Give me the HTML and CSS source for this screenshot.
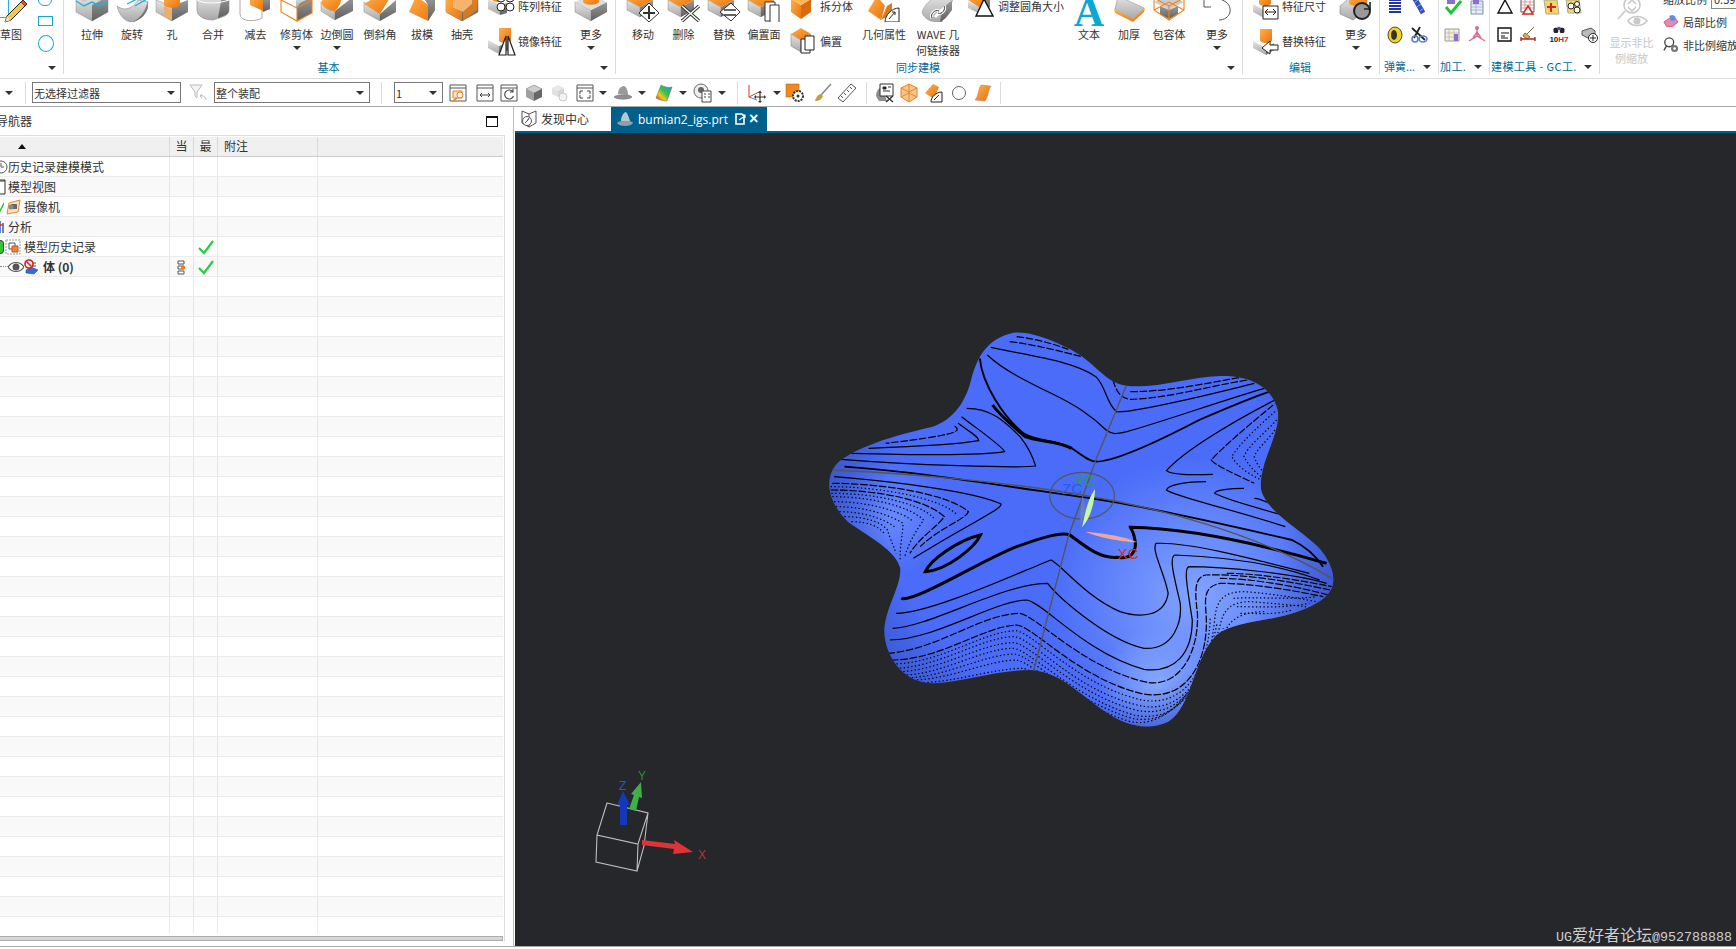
FILE: index.html
```html
<!DOCTYPE html>
<html lang="zh-CN">
<head>
<meta charset="utf-8">
<title>bumian2_igs.prt</title>
<link rel="stylesheet" href="styles.css">
</head>
<body>
<svg class="defs" aria-hidden="true">
  <defs>
    <linearGradient id="gl" x1="0" y1="0" x2="0" y2="1"><stop offset="0" stop-color="#e4e4e4"/><stop offset="1" stop-color="#a8a8a8"/></linearGradient>
    <linearGradient id="gr" x1="0" y1="0" x2="0" y2="1"><stop offset="0" stop-color="#9a9a9a"/><stop offset="1" stop-color="#5f5f5f"/></linearGradient>
    <linearGradient id="go" x1="0" y1="0" x2="1" y2="1"><stop offset="0" stop-color="#ffb04a"/><stop offset="1" stop-color="#e8730c"/></linearGradient>
    <symbol id="extrude" viewBox="0 0 34 22"><path d="M1-4V12L17 21 33 12V-4L25 1 17-3 9 1Z" fill="url(#gl)" stroke="#888" stroke-width=".5"/><path d="M17 21V5L25 1 33-4V12Z" fill="url(#gr)"/><path d="M1 1 9 6 17 2 25 6 33 1" fill="none" stroke="#18b4dc" stroke-width="1.4"/></symbol>
    <symbol id="revolve" viewBox="0 0 34 22"><path d="M2 6C10 12 18 8 23 0L33 2C31 12 24 21 17 22 10 22 4 15 2 6Z" fill="url(#gl)" stroke="#777" stroke-width=".5"/><path d="M18 22C26 18 31 10 33 0V8C31 15 25 20 18 22Z" fill="url(#gr)"/><path d="M12 4 26-3M20 6 32-1" stroke="#18b4dc" stroke-width="1.3" fill="none"/></symbol>
    <symbol id="hole" viewBox="0 0 34 22"><path d="M1 0V12L17 21V6Z" fill="url(#gl)" stroke="#888" stroke-width=".5"/><path d="M33 0V12L17 21V6Z" fill="url(#gr)"/><path d="M9-4H25V4C25 9 9 9 9 4Z" fill="url(#go)"/><path d="M9 6 17 10V20L9 16Z" fill="#e9b06d"/></symbol>
    <symbol id="unite" viewBox="0 0 34 22"><path d="M1-4H33V10C33 16 26 17 17 20 8 20 1 16 1 10Z" fill="url(#gl)" stroke="#888" stroke-width=".6"/><path d="M22 18C30 15 33 14 33 10V-4H26Z" fill="url(#gr)"/><path d="M1 0C8 4 22 4 33 0" fill="none" stroke="#fff"/></symbol>
    <symbol id="subtract" viewBox="0 0 34 22"><path d="M1-3V14C1 22 17 22 23 18V0" fill="none" stroke="#aaa"/><path d="M11-3 24-3V11L11 5Z" fill="url(#go)"/><path d="M24-3H31V9L24 12Z" fill="url(#gr)"/></symbol>
    <symbol id="trim" viewBox="0 0 34 22"><path d="M17 4 32-3V13L17 21Z" fill="url(#gr)"/><path d="M16 9V-3H30L20 3Z" fill="url(#gl)"/><path d="M1 0 17 8 32 0M1 0V12L17 21 32 13V0M17 8V21" fill="none" stroke="#f0811a" stroke-width="1.1"/></symbol>
    <symbol id="blend" viewBox="0 0 34 22"><path d="M1 2V11L15 20V11C9 11 3 7 1 2Z" fill="url(#gl)" stroke="#888" stroke-width=".5"/><path d="M33-3V11L15 20V11Z" fill="url(#gr)"/><path d="M1 3C3 7 9 11 15 11 19 7 21 2 22-3H3Z" fill="url(#go)"/></symbol>
    <symbol id="chamfer" viewBox="0 0 34 22"><path d="M1 2V12L17 21V14Z" fill="url(#gl)" stroke="#888" stroke-width=".5"/><path d="M33 0V12L17 21V14Z" fill="url(#gr)"/><path d="M1 4 14-4 28-4 17 14Z" fill="url(#go)"/></symbol>
    <symbol id="draft" viewBox="0 0 34 22"><path d="M4 12 23 21 30 10 11-4Z" fill="url(#go)"/><path d="M30-4V10L23 21V5L20 0Z" fill="url(#gr)"/></symbol>
    <symbol id="shell" viewBox="0 0 34 22"><path d="M1-4V12L17 21 33 12V-4Z" fill="url(#gr)" stroke="#666" stroke-width=".5"/><path d="M1-4V12L17 21V12L8 8 8-4Z" fill="url(#go)"/><path d="M8-4H27V4L18 12 8 8Z" fill="#f6b36d"/><path d="M27-4V4L18 12V21L32 10V-4Z" fill="#e37d14" opacity=".85"/></symbol>
    <symbol id="more1" viewBox="0 0 34 22"><path d="M1 2V12L17 21V10Z" fill="url(#gl)" stroke="#888" stroke-width=".5"/><path d="M33 2V12L17 21V10Z" fill="url(#gr)"/><path d="M1 2 17-5 33 2 17 10Z" fill="#ddd"/><path d="M9-5H25V1C25 6 9 6 9 1Z" fill="url(#go)"/></symbol>
    <symbol id="okcube" viewBox="0 0 34 22"><path d="M1 0V10L14 17V7Z" fill="url(#gl)" stroke="#888" stroke-width=".5"/><path d="M27 0V10L14 17V7Z" fill="url(#gr)"/><path d="M1 0 14-7 27 0 14 7Z" fill="url(#go)"/></symbol>
    <symbol id="s-move" viewBox="0 0 34 22"><use href="#okcube"/><path d="M23 3 33 13 23 22 13 13Z" fill="#fff" stroke="#333"/><path d="M23 6V19M17 13H29" stroke="#333" stroke-width="2"/></symbol>
    <symbol id="s-del" viewBox="0 0 34 22"><use href="#okcube"/><path d="M15 6 32 21M32 6 15 21" stroke="#333" stroke-width="3.4"/><path d="M15 6 32 21M32 6 15 21" stroke="#fff" stroke-width="1.4"/></symbol>
    <symbol id="s-rep" viewBox="0 0 34 22"><use href="#okcube"/><path d="M13 12 24 3 33 12 24 21Z" fill="#fff" stroke="#333"/><path d="M17 10H29M17 15H29" stroke="#333" stroke-width="1.6"/></symbol>
    <symbol id="s-off" viewBox="0 0 34 22"><use href="#okcube"/><path d="M18 2H28V21H18Z" fill="#fff" stroke="#333"/><path d="M23 5H32V24H23Z" fill="#fff" stroke="#333"/></symbol>
    <symbol id="split" viewBox="0 0 30 30"><path d="M3 8V21L13 28V14Z" fill="url(#go)"/><path d="M23 8V21L13 28V14Z" fill="#d86c0a"/><path d="M3 8 13 2 23 8 13 14Z" fill="#ffb75c"/></symbol>
    <symbol id="offset" viewBox="0 0 30 30"><path d="M3 8V20L13 26V14Z" fill="url(#gl)" stroke="#777" stroke-width=".5"/><path d="M23 8V20L13 26V14Z" fill="url(#gr)"/><path d="M3 8 13 2 23 8 13 14Z" fill="url(#go)"/><path d="M13 13H22V27H13Z" fill="#fff" stroke="#222"/><path d="M17 10H26V24H17Z" fill="#fff" stroke="#222"/></symbol>
    <symbol id="pattern" viewBox="0 0 30 30"><path d="M1 8 13 14V24L1 18Z" fill="url(#gl)"/><path d="M13 14 20 12V22L13 24Z" fill="url(#gr)"/><path d="M5 2H15V8C15 12 5 12 5 8Z" fill="url(#go)"/><g fill="#fff" stroke="#222"><circle cx="14" cy="7" r="4"/><circle cx="23" cy="7" r="4"/><circle cx="14" cy="16" r="4"/><circle cx="23" cy="16" r="4"/></g></symbol>
    <symbol id="mirror" viewBox="0 0 30 30"><path d="M1 14 12 20V28L1 22Z" fill="url(#gl)"/><path d="M12 2H24V14C24 18 12 18 12 14Z" fill="url(#go)"/><path d="M12 20 22 16V24L12 28Z" fill="url(#gr)"/><path d="M19 10 12 29H19ZM21 10V29H28Z" fill="#fff" stroke="#222" stroke-width="1.2"/></symbol>
    <symbol id="geom" viewBox="0 0 34 22"><path d="M1 11 14 20 18 6 10-4Z" fill="url(#go)"/><path d="M14 20 20 6 25 3V14Z" fill="#d86c0a" opacity=".9"/><path d="M18 22 32 22 32 8C25 8 18 15 18 22Z" fill="#fff" stroke="#222"/><path d="M22 19 28 12M25 12H28V15" fill="none" stroke="#222"/></symbol>
    <symbol id="wave" viewBox="0 0 34 22"><path d="M1 12C3 5 12-4 20-5L32 1C26 3 22 10 21 22 12 23 3 20 1 12Z" fill="url(#gl)" stroke="#888" stroke-width=".5"/><path d="M19 22C20 12 24 4 31 1V10C28 14 24 20 19 22Z" fill="url(#gr)"/><path d="M11 18C9 14 14 9 18 11M17 13C21 15 25 9 23 6M14 17 22 9" fill="none" stroke="#fff" stroke-width="3"/><path d="M11 18C9 14 14 9 18 11M17 13C21 15 25 9 23 6" fill="none" stroke="#333" stroke-width="1"/></symbol>
    <symbol id="fillet" viewBox="0 0 30 30"><path d="M2 10 14 17V23L2 17Z" fill="url(#gl)"/><path d="M2 9 10 2H20V10L14 17Z" fill="url(#go)"/><path d="M20 2V10L14 17V23L24 16V2Z" fill="url(#gr)"/><path d="M18 8 27 25H10Z" fill="#fff" stroke="#111" stroke-width="1.4"/></symbol>
    <symbol id="thick" viewBox="0 0 34 22"><path d="M6-4 32 8 21 19 3 9Z" fill="url(#gl)" stroke="#888" stroke-width=".5"/><path d="M2 9 21 19 33 8 32 12 21 22 3 13Z" fill="url(#go)"/></symbol>
    <symbol id="wrap" viewBox="0 0 34 22"><path d="M17-4 32 2 17 10 2 2Z" fill="#ccc"/><path d="M8 6 17 10 26 6 26 14 17 19 8 14Z" fill="url(#gr)"/><path d="M2-2 17 6 32-2M2-2V10L17 20 32 10V-2M17 6V20M2 10 17 2 32 10" fill="none" stroke="#f0811a" stroke-width="1.1"/></symbol>
    <symbol id="more2" viewBox="0 0 34 22"><path d="M4 0V7H11" fill="none" stroke="#555" stroke-width="1"/><path d="M22 0C28 2 31 7 30 12 29 17 24 20 19 20" fill="none" stroke="#555" stroke-width="1"/></symbol>
    <symbol id="dim" viewBox="0 0 30 30"><path d="M1 13 14 20V28L1 21Z" fill="url(#gl)"/><path d="M14 20 20 17V25L14 28Z" fill="url(#gr)"/><path d="M7 2H19V12C19 16 7 16 7 12Z" fill="url(#go)"/><path d="M11 15H26V28H11Z" fill="#fff" stroke="#222"/><path d="M13 21H24M13 21 16 18M13 21 16 24M24 21 21 18M24 21 21 24" stroke="#222" fill="none"/></symbol>
    <symbol id="repl" viewBox="0 0 30 30"><path d="M1 15 14 22V29L1 22Z" fill="url(#gl)"/><path d="M14 22 22 17V24L14 29Z" fill="url(#gr)"/><path d="M8 3H20V14C20 18 8 18 8 14Z" fill="url(#go)"/><path d="M10 22 18 15V19H26V24H18V28Z" fill="#fff" stroke="#222"/></symbol>
    <symbol id="more3" viewBox="0 0 34 22"><path d="M1 6 12-3 28-2V10L14 20 1 14Z" fill="url(#gl)" stroke="#777" stroke-width=".5"/><path d="M10-3H28V3C28 7 10 7 10 3Z" fill="url(#go)"/><circle cx="23" cy="11" r="8" fill="#999" stroke="#222" stroke-width="2"/><path d="M31 2V9H25" fill="none" stroke="#222" stroke-width="1.6"/></symbol>
    <symbol id="spring" viewBox="0 0 18 18"><path d="M3 2H15M3 5H15M3 8H15M3 11H15M3 14H15" stroke="#2233aa" stroke-width="2"/></symbol>
    <symbol id="spring2" viewBox="0 0 18 18"><path d="M5 1 13 15" stroke="#2e50c8" stroke-width="5"/><path d="M4 5 8 2M7 9 11 6M10 13 14 10" stroke="#aac" stroke-width="1"/></symbol>
    <symbol id="washer" viewBox="0 0 18 18"><ellipse cx="9" cy="9" rx="7" ry="8" fill="#f5d21f" stroke="#222" stroke-width=".8"/><ellipse cx="8" cy="9" rx="3" ry="5" fill="#333"/></symbol>
    <symbol id="scis" viewBox="0 0 18 18"><path d="M2 2 15 14M10 1 4 12" stroke="#222" stroke-width="1.8"/><ellipse cx="13" cy="13" rx="4" ry="3" fill="none" stroke="#5c7fc4" stroke-width="1.6"/><ellipse cx="5" cy="13" rx="3" ry="3" fill="none" stroke="#5c7fc4" stroke-width="1.6"/></symbol>
    <symbol id="check" viewBox="0 0 18 18"><path d="M3-1H11V6H3Z" fill="#8a6ed0"/><path d="M2 9 7 15 17 3" fill="none" stroke="#22c33a" stroke-width="3"/></symbol>
    <symbol id="table" viewBox="0 0 18 18"><path d="M3 3H15V16H3Z" fill="#e8eef8" stroke="#7f8fb0"/><path d="M3 6H15M3 9H15M3 12H15M8 3V16" stroke="#9aa8c0" stroke-width=".7"/><path d="M5-2H11V6H5Z" fill="#8a6ed0"/></symbol>
    <symbol id="grid2" viewBox="0 0 18 18"><path d="M1 3H15V15H1Z" fill="#f6efd8" stroke="#9a9a9a"/><path d="M1 7H15M1 11H15M5 3V15M10 3V15" stroke="#aaa" stroke-width=".6"/><path d="M10 8H14V15H10Z" fill="#8a6ed0"/></symbol>
    <symbol id="pinkaxes" viewBox="0 0 18 18"><circle cx="9" cy="2" r="2" fill="#d86a8a"/><path d="M9 2V10L1 15M9 10 17 15M5 12 9 6 13 12" fill="none" stroke="#d86a8a" stroke-width="1.4"/></symbol>
    <symbol id="tri" viewBox="0 0 18 18"><path d="M9 2 16 15H2Z" fill="none" stroke="#111" stroke-width="1.4"/></symbol>
    <symbol id="tbl-r" viewBox="0 0 18 18"><path d="M2 1H15V14H2Z" fill="#fff" stroke="#555"/><path d="M2 4H15M2 7H15M2 10H15M6 1V14M11 1V14" stroke="#c66" stroke-width=".6"/><path d="M9 8 14 16H4Z" fill="#fff" stroke="#d22" stroke-width="1.5"/></symbol>
    <symbol id="ystar" viewBox="0 0 18 18"><path d="M2 2 15 2 17 16H4Z" fill="#f3d66b" stroke="#aa9"/><path d="M9 5V14M5 9H14" stroke="#d22" stroke-width="2"/></symbol>
    <symbol id="ychain" viewBox="0 0 18 18"><path d="M1 2 14 2 16 15H3Z" fill="#f3d66b" stroke="#aa9"/><circle cx="6" cy="8" r="3" fill="#fff" stroke="#222"/><circle cx="12" cy="12" r="3" fill="#fff" stroke="#222"/><circle cx="12" cy="6" r="2.5" fill="#fff" stroke="#222"/></symbol>
    <symbol id="note" viewBox="0 0 18 18"><path d="M2 2H15V15H2Z" fill="#fff" stroke="#111" stroke-width="1.4"/><path d="M5 7H13M5 10H9M5 12H12" stroke="#111"/></symbol>
    <symbol id="brush" viewBox="0 0 18 18"><path d="M8 8 15 1M6 7 11 11 8 13 4 10Z" fill="#d8b256" stroke="#8a6a2a"/><path d="M2 15V11M16 15V11M2 13H16" stroke="#b22" stroke-width="1.4"/></symbol>
    <symbol id="h7" viewBox="0 0 18 12"><rect x="2" y="3" width="6" height="7" rx="2" fill="#223"/><rect x="10" y="3" width="6" height="7" rx="2" fill="#223"/><rect x="7" y="2" width="4" height="4" fill="#556"/></symbol>
    <symbol id="cubeplus" viewBox="0 0 18 18"><path d="M1 5 10 2 14 5V9L7 12 1 9Z" fill="#bbb" stroke="#555"/><circle cx="12" cy="12" r="4.5" fill="#fff" stroke="#222"/><path d="M9 12H15M12 9V15" stroke="#222"/></symbol>
    <symbol id="t-win" viewBox="0 0 20 20"><path d="M2 2H18V18H2Z" fill="#fff" stroke="#555"/><path d="M2 5H18" stroke="#555"/><path d="M5 8H14V15H5Z" fill="#fbe2c4" stroke="#ee7c10"/><circle cx="12" cy="12" r="3" fill="#fff" stroke="#ee7c10"/><path d="M9 15 5 18" stroke="#ee7c10" stroke-width="1.4"/></symbol>
    <symbol id="t-fit" viewBox="0 0 20 20"><path d="M2 2H18V18H2Z" fill="#fff" stroke="#555"/><path d="M2 5H18" stroke="#555"/><path d="M5 12H15M5 12 7 10M5 12 7 14M15 12 13 10M15 12 13 14" fill="none" stroke="#444"/></symbol>
    <symbol id="t-rot" viewBox="0 0 20 20"><path d="M2 2H18V18H2Z" fill="#fff" stroke="#555"/><path d="M2 5H18" stroke="#555"/><path d="M14 9A4.500 4.500 0 1 0 14.500 13M14 6V9H11" fill="none" stroke="#444" stroke-width="1.1"/></symbol>
    <symbol id="t-cube" viewBox="0 0 20 20"><path d="M10 2 18 6 10 10 2 6Z" fill="#cfcfcf" stroke="#666" stroke-width=".5"/><path d="M2 6 10 10V18L2 14Z" fill="#a0a0a0"/><path d="M18 6 10 10V18L18 14Z" fill="#666"/></symbol>
    <symbol id="t-cubeg" viewBox="0 0 20 20"><g opacity=".35"><path d="M9 2 15 5 9 8 3 5Z" fill="#bbb"/><path d="M3 5 9 8V14L3 11Z" fill="#aaa"/><path d="M15 5 9 8V14L15 11Z" fill="#888"/><circle cx="14" cy="14" r="4" fill="#ddd" stroke="#666"/></g></symbol>
    <symbol id="t-zoom" viewBox="0 0 20 20"><path d="M2 2H18V18H2Z" fill="#fff" stroke="#555"/><path d="M2 5H18" stroke="#555"/><path d="M5 8H8M5 8V11M15 8H12M15 8V11M5 15H8M5 15V12M15 15H12M15 15V12" stroke="#444" fill="none"/></symbol>
    <symbol id="t-shade" viewBox="0 0 20 20"><path d="M5 11C5 5 9 3 11 3 14 4 15 9 15 12Z" fill="#9a9a9a"/><path d="M1 14C3 11 18 11 19 14 17 17 3 17 1 14Z" fill="#8f8f8f" stroke="#777" stroke-width=".5"/></symbol>
    <symbol id="t-rainbow" viewBox="0 0 20 20"><defs><linearGradient id="rb" x1="0" x2="1" y1="1" y2="0"><stop offset="0" stop-color="#d91b1b"/><stop offset=".3" stop-color="#f5c911"/><stop offset=".55" stop-color="#34c24a"/><stop offset="1" stop-color="#1f8fe0"/></linearGradient></defs><path d="M7 2C10 4 15 5 18 4L13 18C10 18 5 17 2 15Z" fill="url(#rb)" stroke="#666" stroke-width=".5"/></symbol>
    <symbol id="t-layer" viewBox="0 0 20 20"><circle cx="8" cy="8" r="7" fill="#eee" stroke="#666"/><circle cx="8" cy="7" r="3" fill="#666"/><path d="M9 8H18V19H9Z" fill="#fff" stroke="#444"/><path d="M11 11H13M15 11H17M11 14H13M15 14H17" stroke="#444"/></symbol>
    <symbol id="t-axes" viewBox="0 0 20 20"><path d="M2 2V14L14 8" fill="none" stroke="#e23030" stroke-width="1"/><path d="M2 14 10 17" stroke="#2f8bd6"/><path d="M13 9V19M8 14H18" stroke="#333" stroke-width="1.2"/><path d="M13 8 11 10H15ZM13 20 11 18H15ZM7 14 9 12V16ZM19 14 17 12V16Z" fill="#333"/></symbol>
    <symbol id="t-sqg" viewBox="0 0 20 20"><path d="M1 1H14V14H1Z" fill="#f08a1d" stroke="#9a5a10" stroke-width=".5"/><circle cx="13" cy="13" r="5" fill="#fff" stroke="#333" stroke-dasharray="2 1" stroke-width="2"/><circle cx="13" cy="13" r="1.5" fill="#333"/></symbol>
    <symbol id="t-brush" viewBox="0 0 20 20"><path d="M18 1 8 12" stroke="#888" stroke-width="1.6"/><path d="M8 11C4 12 3 15 2 18 6 18 9 16 10 13Z" fill="#c89c3c"/></symbol>
    <symbol id="t-ruler" viewBox="0 0 20 20"><path d="M14 1 19 5 6 19 1 15Z" fill="#fff" stroke="#555"/><path d="M13 4 15 6M10 7 12 9M7 10 9 12M4 13 6 15" stroke="#555"/></symbol>
    <symbol id="t-docg" viewBox="0 0 20 20"><path d="M1 13C1 9 3 5 7 4L12 18 4 18Z" fill="#8f8f8f"/><path d="M5 1H18V13H5Z" fill="#fff" stroke="#333"/><path d="M8 4H11V6H8ZM13 4H16M8 8H15" stroke="#333"/><path d="M11 13 18 19M18 13 11 19" stroke="#333" stroke-width="1.5"/></symbol>
    <symbol id="t-wire" viewBox="0 0 20 20"><path d="M10 1 18 5V14L10 19 2 14V5Z" fill="#f6c68e" stroke="#ec7f16"/><path d="M2 5 10 9 18 5M10 9V19M2 14 10 10 18 14M10 1V9" fill="none" stroke="#ec7f16" stroke-width=".9"/></symbol>
    <symbol id="t-orarr" viewBox="0 0 20 20"><path d="M1 10 9 1 15 4 10 16Z" fill="url(#go)"/><path d="M7 19H18V9C12 9 7 14 7 19Z" fill="#fff" stroke="#222"/><path d="M10 17 15 12" stroke="#222"/></symbol>
    <symbol id="t-scroll" viewBox="0 0 20 20"><path d="M8 2 18 3C15 7 16 12 12 18L2 17C6 13 5 6 8 2Z" fill="url(#go)" stroke="#a66" stroke-width=".4"/></symbol>
    <symbol id="filt" viewBox="0 0 20 20"><path d="M2 2H14L9 9V15L7 13V9Z" fill="#f4f4f4" stroke="#bbb"/><path d="M18 17C18 14 15 12 12 13M12 13 14 11M12 13 14 15" fill="none" stroke="#bbb"/></symbol>
    <symbol id="tab-home" viewBox="0 0 18 18"><path d="M2 1 9 4 16 1V13L9 17 2 13Z" fill="#fff" stroke="#555"/><path d="M9 4V17" stroke="#555"/><circle cx="7" cy="11" r="4.5" fill="#fff" stroke="#555"/><path d="M5 13 8 10 9 8" stroke="#555"/></symbol>
    <symbol id="tab-part" viewBox="0 0 18 18"><path d="M1 13C3 10 16 10 17 13 15 17 3 17 1 13Z" fill="#8fa0ac"/><path d="M5 11C5 6 8 2 10 2 12 4 13 8 14 11Z" fill="#b9c6cf"/></symbol>
    <symbol id="hist" viewBox="0 0 16 16"><circle cx="9" cy="8" r="6" fill="#fff" stroke="#555"/><path d="M9 4V8H12" stroke="#555" fill="none"/></symbol>
    <symbol id="views" viewBox="0 0 16 16"><path d="M4 1H13V15H4Z" fill="#fff" stroke="#333"/><path d="M8 1V3M10 1V3M12 1V3" stroke="#333"/></symbol>
    <symbol id="camera" viewBox="0 0 16 16"><path d="M3 4 14 1 12 13 1 15Z" fill="#fbe3c8" stroke="#ef8420"/><rect x="5" y="5" width="6" height="5" fill="#666"/><circle cx="5" cy="8" r="2.500" fill="#888"/></symbol>
    <symbol id="anal" viewBox="0 0 16 16"><path d="M8 2V14M11 4V14" stroke="#2b4fa8" stroke-width="1.4"/><path d="M8 6H11" stroke="#d23a2a" stroke-width="1.5"/></symbol>
    <symbol id="box" viewBox="0 0 16 16"><path d="M1 1H15V15H1Z" fill="#fff" stroke="#999" stroke-dasharray="2 1"/><path d="M4 4H10V10H4Z" fill="#fff" stroke="#555"/><path d="M7 7H13V13H7Z" fill="#f08a1d" stroke="#a55"/></symbol>
    <symbol id="eye" viewBox="0 0 16 16"><path d="M0 8C4 2 12 2 16 8 12 14 4 14 0 8Z" fill="#fff" stroke="#555" stroke-width="1.2"/><circle cx="8" cy="8" r="3.500" fill="#555"/></symbol>
    <symbol id="body" viewBox="0 0 16 16"><path d="M2 11 7 8 14 11 10 15 2 14Z" fill="#2f6ed2" stroke="#1e3f8f" stroke-width=".5"/><path d="M7 2V8M7 4H12M7 7H12" stroke="#555"/><circle cx="5" cy="5" r="4" fill="#fff" stroke="#d21f1f" stroke-width="1.6"/><path d="M2.500 2.500 7.500 7.500" stroke="#d21f1f" stroke-width="1.6"/></symbol>
    <symbol id="tree2" viewBox="0 0 12 16"><path d="M2 2H8V5H2ZM2 7H8V10H2ZM2 12H8V15H2Z" fill="#fff" stroke="#555"/><path d="M5 7H9V10H5Z" fill="#ef7f12"/></symbol>
    <symbol id="ok" viewBox="0 0 16 16"><path d="M1 9 6 14 15 2" fill="none" stroke="#25cf3f" stroke-width="2.200"/></symbol>
    <symbol id="tick" viewBox="0 0 4 12"><path d="M-3 8 0 10 4 2" fill="none" stroke="#25cf3f" stroke-width="1.6"/></symbol>
    <symbol id="disp" viewBox="0 0 34 34"><g fill="none" stroke="#c8c8c8" stroke-width="1.6"><circle cx="17" cy="8" r="8"/><path d="M13 7 17 3 21 7M13 10 17 14 21 10M10 14 3 22"/><path d="M13 24C17 18 27 18 32 24 27 30 17 30 13 24Z"/></g><circle cx="22" cy="24" r="3.500" fill="#c8c8c8"/></symbol>
    <symbol id="local" viewBox="0 0 18 18"><path d="M1 9 7 5H14L17 9 11 14H4Z" fill="#e58aa8" stroke="#d23a72" stroke-width=".8"/><path d="M7 2 11 1 14 3V7L9 8Z" fill="#5c8ee6"/></symbol>
    <symbol id="nonuni" viewBox="0 0 18 18"><circle cx="7" cy="6" r="5" fill="none" stroke="#444" stroke-width="1.5"/><path d="M4 10 1 15" stroke="#444" stroke-width="1.500"/><circle cx="13" cy="13" r="4" fill="#777"/><circle cx="13" cy="13" r="1.500" fill="#fff"/></symbol>
    <symbol id="pencil" viewBox="0 0 28 24"><path d="M23 1 27 5 11 21 5 23 7 17Z" fill="#f6c84a" stroke="#222" stroke-width="1"/><path d="M23 1 27 5 25 7 21 3Z" fill="#d84e38" stroke="#222" stroke-width=".6"/><path d="M7 17 5 23 11 21Z" fill="#f2dcb8"/></symbol>
  </defs>
</svg>

<header class="ribbon">
  <section class="group">
    <div class="items it0">
      <div class="tool"><span class="sketchbox"><svg class="pencil"><use href="#pencil"/></svg></span><span class="lbl">草图</span></div>
      <div class="shapes"><i class="sh-top"></i><i class="sh-rect"></i><i class="sh-circ"></i></div>
    </div>
    <footer class="gfoot"><span class="gname"></span><span class="garrow"></span></footer>
  </section>

  <section class="group">
    <div class="items it1">
      <div class="tool"><svg class="ic"><use href="#extrude"/></svg><span class="lbl">拉伸</span></div>
      <div class="tool"><svg class="ic"><use href="#revolve"/></svg><span class="lbl">旋转</span></div>
      <div class="tool"><svg class="ic"><use href="#hole"/></svg><span class="lbl">孔</span></div>
      <div class="tool"><svg class="ic"><use href="#unite"/></svg><span class="lbl">合并</span></div>
      <div class="tool"><svg class="ic"><use href="#subtract"/></svg><span class="lbl">减去</span></div>
      <div class="tool"><svg class="ic"><use href="#trim"/></svg><span class="lbl">修剪体</span><i class="caret"></i></div>
      <div class="tool"><svg class="ic"><use href="#blend"/></svg><span class="lbl">边倒圆</span><i class="caret"></i></div>
      <div class="tool"><svg class="ic"><use href="#chamfer"/></svg><span class="lbl">倒斜角</span></div>
      <div class="tool"><svg class="ic"><use href="#draft"/></svg><span class="lbl">拔模</span></div>
      <div class="tool"><svg class="ic"><use href="#shell"/></svg><span class="lbl">抽壳</span></div>
      <div class="stack">
        <div class="srow"><svg class="sic"><use href="#pattern"/></svg><span>阵列特征</span></div>
        <div class="srow"><svg class="sic"><use href="#mirror"/></svg><span>镜像特征</span></div>
      </div>
      <div class="tool"><svg class="ic"><use href="#more1"/></svg><span class="lbl">更多</span><i class="caret"></i></div>
    </div>
    <footer class="gfoot"><span class="gname">基本</span><span class="garrow"></span></footer>
  </section>

  <section class="group">
    <div class="items it2">
      <div class="tool"><svg class="ic"><use href="#s-move"/></svg><span class="lbl">移动</span></div>
      <div class="tool"><svg class="ic"><use href="#s-del"/></svg><span class="lbl">删除</span></div>
      <div class="tool"><svg class="ic"><use href="#s-rep"/></svg><span class="lbl">替换</span></div>
      <div class="tool"><svg class="ic"><use href="#s-off"/></svg><span class="lbl">偏置面</span></div>
      <div class="stack pad4">
        <div class="srow"><svg class="sic"><use href="#split"/></svg><span>拆分体</span></div>
        <div class="srow"><svg class="sic"><use href="#offset"/></svg><span>偏置</span></div>
      </div>
      <div class="tool"><svg class="ic"><use href="#geom"/></svg><span class="lbl">几何属性</span></div>
      <div class="tool"><svg class="ic"><use href="#wave"/></svg><span class="lbl">WAVE 几<br>何链接器</span></div>
      <div class="stack neg2">
        <div class="srow"><svg class="sic"><use href="#fillet"/></svg><span>调整圆角大小</span></div>
      </div>
      <div class="tool"><span class="bigA">A</span><span class="lbl">文本</span></div>
      <div class="tool"><svg class="ic"><use href="#thick"/></svg><span class="lbl">加厚</span></div>
      <div class="tool"><svg class="ic"><use href="#wrap"/></svg><span class="lbl">包容体</span></div>
      <div class="tool"><svg class="ic"><use href="#more2"/></svg><span class="lbl">更多</span><i class="caret"></i></div>
    </div>
    <footer class="gfoot"><span class="gname">同步建模</span><span class="garrow"></span></footer>
  </section>

  <section class="group">
    <div class="items it3">
      <div class="stack pad9">
        <div class="srow"><svg class="sic"><use href="#dim"/></svg><span>特征尺寸</span></div>
        <div class="srow"><svg class="sic"><use href="#repl"/></svg><span>替换特征</span></div>
      </div>
      <div class="tool"><svg class="ic"><use href="#more3"/></svg><span class="lbl">更多</span><i class="caret"></i></div>
    </div>
    <footer class="gfoot"><span class="gname">编辑</span><span class="garrow"></span></footer>
  </section>

  <section class="group">
    <div class="irows p6">
      <div class="irow"><svg class="mi"><use href="#spring"/></svg><svg class="mi"><use href="#spring2"/></svg></div>
      <div class="irow"><svg class="mi"><use href="#washer"/></svg><svg class="mi"><use href="#scis"/></svg></div>
    </div>
    <footer class="gfoot left g4"><span class="gname">弹簧...</span><span class="garrow"></span></footer>
  </section>

  <section class="group">
    <div class="irows p5">
      <div class="irow"><svg class="mi"><use href="#check"/></svg><svg class="mi"><use href="#table"/></svg></div>
      <div class="irow"><svg class="mi"><use href="#grid2"/></svg><svg class="mi"><use href="#pinkaxes"/></svg></div>
    </div>
    <footer class="gfoot left"><span class="gname">加工...</span><span class="garrow"></span></footer>
  </section>

  <section class="group">
    <div class="irows p8">
      <div class="irow"><svg class="mi"><use href="#tri"/></svg><svg class="mi"><use href="#tbl-r"/></svg><svg class="mi"><use href="#ystar"/></svg><svg class="mi"><use href="#ychain"/></svg></div>
      <div class="irow"><svg class="mi"><use href="#note"/></svg><svg class="mi"><use href="#brush"/></svg><i class="idiv"></i><span class="h7"><svg class="h7i"><use href="#h7"/></svg><b>10<em>H7</em></b></span><i class="idiv"></i><svg class="mi"><use href="#cubeplus"/></svg></div>
    </div>
    <footer class="gfoot left"><span class="gname">建模工具 - GC工...</span><span class="garrow"></span></footer>
  </section>

  <section class="group last">
    <div class="dispo">
      <svg class="dispi"><use href="#disp"/></svg>
      <span class="lbl off">显示非比<br>例缩放</span>
    </div>
    <div class="scale">
      <div class="srow2"><span>缩放比例</span><span class="sinput">0.5976</span></div>
      <div class="srow2"><svg class="si"><use href="#local"/></svg><span>局部比例</span></div>
      <div class="srow2"><svg class="si"><use href="#nonuni"/></svg><span>非比例缩放</span></div>
    </div>
  </section>
</header>

<nav class="toolbar">
  <i class="caret c0"></i>
  <i class="sep m12"></i>
  <div class="combo w149 m6"><span>无选择过滤器</span><i class="caret"></i></div>
  <svg class="ti m7"><use href="#filt"/></svg>
  <div class="combo w156 m6"><span>整个装配</span><i class="caret"></i></div>
  <i class="sep m11"></i>
  <div class="combo w49 m12"><span>1</span><i class="caret"></i></div>
  <svg class="ti m5"><use href="#t-win"/></svg>
  <svg class="ti m7"><use href="#t-fit"/></svg>
  <svg class="ti m4"><use href="#t-rot"/></svg>
  <svg class="ti m5"><use href="#t-cube"/></svg>
  <svg class="ti m5"><use href="#t-cubeg"/></svg>
  <svg class="ti m6"><use href="#t-zoom"/></svg>
  <i class="caret m4"></i>
  <svg class="ti m6"><use href="#t-shade"/></svg>
  <i class="caret m5"></i>
  <svg class="ti m8"><use href="#t-rainbow"/></svg>
  <i class="caret m5"></i>
  <svg class="ti m6"><use href="#t-layer"/></svg>
  <i class="caret m5"></i>
  <i class="sep m11"></i>
  <svg class="ti m9"><use href="#t-axes"/></svg>
  <i class="caret m6"></i>
  <svg class="ti m4"><use href="#t-sqg"/></svg>
  <svg class="ti m8"><use href="#t-brush"/></svg>
  <svg class="ti m4"><use href="#t-ruler"/></svg>
  <i class="sep m9"></i>
  <svg class="ti m8"><use href="#t-docg"/></svg>
  <svg class="ti m4"><use href="#t-wire"/></svg>
  <svg class="ti m5"><use href="#t-orarr"/></svg>
  <span class="ring"></span>
  <svg class="ti m4"><use href="#t-scroll"/></svg>
  <i class="sep m7"></i>
</nav>

<main class="main">
  <aside class="panel">
    <div class="navh"><span class="navt">导航器</span><i class="maxbox"></i></div>
    <div class="tree">
      <div class="thead">
        <div class="th"><i class="sort"></i></div>
        <div class="th ctr">当</div>
        <div class="th ctr">最</div>
        <div class="th note-h">附注</div>
        <div class="th"></div>
      </div>
      <div class="rows">
        <div class="row"><div class="name"><svg class="ri ri0"><use href="#hist"/></svg><span>历史记录建模模式</span></div></div>
        <div class="row"><div class="name"><svg class="ri ri0"><use href="#views"/></svg><span>模型视图</span></div></div>
        <div class="row"><div class="name"><svg class="tick"><use href="#tick"/></svg><svg class="ri"><use href="#camera"/></svg><span class="t2">摄像机</span></div></div>
        <div class="row"><div class="name"><svg class="ri ri0"><use href="#anal"/></svg><span>分析</span></div></div>
        <div class="row"><div class="name"><i class="dot"></i><svg class="ri"><use href="#box"/></svg><span class="t3">模型历史记录</span></div><div></div><div class="cc"><svg class="ok"><use href="#ok"/></svg></div></div>
        <div class="row"><div class="name bold"><i class="dots"></i><svg class="ri"><use href="#eye"/></svg><svg class="ri"><use href="#body"/></svg><span class="t3">体 (0)</span></div><div class="cc"><svg class="tr2"><use href="#tree2"/></svg></div><div class="cc"><svg class="ok"><use href="#ok"/></svg></div></div>
        <div class="row"></div><div class="row"></div><div class="row"></div><div class="row"></div><div class="row"></div>
        <div class="row"></div><div class="row"></div><div class="row"></div><div class="row"></div><div class="row"></div>
        <div class="row"></div><div class="row"></div><div class="row"></div><div class="row"></div><div class="row"></div>
        <div class="row"></div><div class="row"></div><div class="row"></div><div class="row"></div><div class="row"></div>
        <div class="row"></div><div class="row"></div><div class="row"></div><div class="row"></div><div class="row"></div>
        <div class="row"></div><div class="row"></div><div class="row"></div><div class="row"></div><div class="row"></div>
        <div class="row"></div><div class="row"></div><div class="row"></div>
      </div>
      <div class="hbar"></div>
    </div>
  </aside>

  <section class="work">
    <div class="tabs">
      <div class="tab"><svg class="tabi"><use href="#tab-home"/></svg><span>发现中心</span></div>
      <div class="tab active"><svg class="tabi"><use href="#tab-part"/></svg><span class="fname">bumian2_igs.prt</span><svg class="pop" viewBox="0 0 12 12"><path d="M2 1H8L10 3V11H2Z" fill="none" stroke="#fff" stroke-width="1.6"/><path d="M5 7 11 3M8 2H11V5" fill="none" stroke="#fff" stroke-width="1.200"/></svg><span class="close">×</span></div>
    </div>
    <div class="scene">
      <svg class="star" viewBox="0 0 1568 1260" preserveAspectRatio="none">
        <defs>
          <path id="starpath" d="M590 38C520 55 490 100 470 170 455 240 420 300 350 322 250 345 120 385 75 435 40 480 55 550 110 605 170 650 250 690 262 745 265 800 220 860 216 930 215 1000 265 1090 360 1090 450 1085 540 1050 640 1050 720 1055 770 1110 850 1170 910 1215 980 1235 1040 1205 1110 1160 1110 1020 1180 945 1240 895 1370 910 1470 850 1530 815 1530 770 1500 715 1470 650 1330 590 1310 510 1300 430 1370 340 1358 270 1340 195 1270 165 1190 168 1100 172 1010 205 925 198 850 190 830 120 740 80 690 55 640 35 590 38Z"/>
          <clipPath id="starclip"><use href="#starpath"/></clipPath>
          <radialGradient id="hl1" gradientUnits="userSpaceOnUse" cx="1120" cy="830" r="420"><stop offset="0" stop-color="#82a4ff"/><stop offset="1" stop-color="#82a4ff" stop-opacity="0"/></radialGradient>
          <radialGradient id="hl2" gradientUnits="userSpaceOnUse" cx="1010" cy="1090" r="170"><stop offset="0" stop-color="#86a8ff"/><stop offset="1" stop-color="#86a8ff" stop-opacity="0"/></radialGradient>
          <radialGradient id="hl3" gradientUnits="userSpaceOnUse" cx="240" cy="590" r="170"><stop offset="0" stop-color="#6f90ff" stop-opacity=".8"/><stop offset="1" stop-color="#6f90ff" stop-opacity="0"/></radialGradient>
          <radialGradient id="dk" gradientUnits="userSpaceOnUse" cx="800" cy="560" r="800"><stop offset=".72" stop-color="#2e45a8" stop-opacity="0"/><stop offset="1" stop-color="#2e45a8" stop-opacity=".65"/></radialGradient>
        </defs>
        <use href="#starpath" fill="#4a6cf8"/>
        <g clip-path="url(#starclip)">
          <rect width="1568" height="1260" fill="url(#hl1)"/>
          <rect width="1568" height="1260" fill="url(#hl2)"/>
          <rect width="1568" height="1260" fill="url(#hl3)"/>
          <rect width="1568" height="1260" fill="url(#dk)"/>
          <g fill="none" stroke="#000">
            <g class="thin">
              <path d="M515 105C560 150 640 190 700 220 780 260 820 290 860 330 880 345 890 342 920 335 1040 300 1200 240 1320 205"/>
              <path d="M525 82C620 105 760 120 830 170 860 200 860 250 890 275 920 280 1100 240 1290 190"/>
              <path class="dash" d="M880 180C890 220 905 235 930 238 1040 235 1150 200 1270 180"/>
              <path class="dash" d="M930 215C1040 215 1150 190 1250 172"/>
              <path class="dash" d="M580 65C660 75 730 95 790 110"/>
              <path class="dash" d="M600 50C650 55 700 70 750 88"/>
              <path d="M455 265C530 265 570 310 610 350 640 390 650 420 655 438 600 445 300 435 90 418"/>
              <path d="M440 290C490 330 560 380 565 395 500 408 300 405 120 400"/>
              <path d="M430 310C470 340 490 350 490 362 420 375 300 380 170 385"/>
              <path class="dash" d="M420 318C435 330 435 338 350 352 300 360 260 365 220 370"/>
              <path d="M1350 240C1200 320 1080 400 1035 452 1050 465 1100 465 1170 463"/>
              <path d="M1150 485C1090 485 1040 495 1035 510 1060 530 1200 560 1380 620"/>
              <path d="M1260 505C1220 505 1175 510 1175 520 1200 535 1300 565 1390 590"/>
              <path d="M1290 535C1310 535 1370 565 1385 585"/>
              <path class="dash" d="M1345 255C1280 310 1200 380 1165 420 1175 435 1230 460 1290 490"/>
              <path class="dot" d="M1350 275C1300 320 1240 380 1225 410 1240 440 1280 465 1310 480"/>
              <path class="dot" d="M1355 300C1320 340 1270 380 1260 410 1275 440 1300 465 1320 475"/>
              <path class="dot" d="M1350 330C1330 360 1295 390 1290 410 1300 440 1310 450 1330 465"/>
              <path d="M70 470C250 485 480 515 555 552 555 570 470 605 300 715"/>
              <path class="dash" d="M65 490C200 490 400 520 460 575 450 600 380 620 320 680"/>
              <path class="dash" d="M60 510C200 510 340 540 390 590 370 620 320 650 290 700"/>
              <path class="dot" d="M60 500C190 500 370 530 425 582"/>
              <path class="dot" d="M62 520C190 520 320 550 360 595"/>
              <path class="dot" d="M65 530C180 530 290 560 330 600 310 630 290 660 275 710"/>
              <path class="dot" d="M70 545C170 545 270 575 300 605"/>
              <path class="dot" d="M75 560C170 560 240 590 270 610 270 640 260 680 262 720"/>
              <path class="dot" d="M85 575C160 575 220 600 245 620"/>
              <path class="dot" d="M100 590C170 590 210 610 225 630 230 650 240 670 250 700"/>
              <path class="dot" d="M120 605C170 605 200 620 215 640"/>
              <path d="M250 880C350 880 600 760 700 720 730 735 800 830 900 875 960 895 1030 890 1040 820 1030 760 990 690 1005 670 1100 665 1300 720 1450 760"/>
              <path d="M240 925C350 920 560 790 690 790 720 830 860 960 970 985 1060 990 1080 900 1075 850 1060 780 1040 710 1060 705 1200 710 1350 730 1480 780"/>
              <path d="M232 960C360 960 540 840 630 840 680 850 800 1000 970 1048 1060 1060 1110 1000 1110 900 1095 800 1085 745 1100 740 1200 740 1400 760 1500 790"/>
              <path class="dash" d="M225 1000C370 990 500 880 610 880 660 890 790 1040 970 1085 1070 1110 1130 1000 1125 880 1115 800 1120 770 1150 765 1250 760 1400 785 1510 810"/>
              <path class="dash" d="M235 1020C380 1020 500 920 600 915 650 920 780 1075 960 1120 1090 1150 1160 1030 1150 880 1145 820 1150 800 1190 790 1280 790 1400 810 1490 830"/>
              <path class="dot" d="M240 1032C380 1030 500 935 598 932 650 940 775 1092 955 1138 1085 1170 1160 1045 1162 890"/>
              <path class="dot" d="M250 1045C380 1040 500 950 595 950 650 960 770 1110 950 1155 1080 1190 1160 1060 1175 900 1180 840 1200 815 1260 815 1340 820 1420 835 1470 845"/>
              <path class="dot" d="M260 1055C380 1052 500 968 592 968 645 975 765 1120 945 1170 1070 1200 1145 1090 1182 910"/>
              <path class="dot" d="M270 1065C380 1065 500 985 590 985 640 990 760 1130 940 1185 1060 1210 1130 1120 1190 920 1200 870 1220 845 1280 845 1340 850 1400 855 1440 860"/>
              <path class="dot" d="M285 1073C390 1072 510 1002 595 1002 645 1010 760 1140 935 1195 1045 1218 1120 1125 1200 925"/>
              <path class="dot" d="M300 1080C400 1080 520 1020 600 1020 650 1030 760 1150 930 1205 1030 1225 1110 1130 1210 925 1225 895 1260 875 1320 875"/>
              <path class="dot" d="M330 1088C420 1085 540 1045 620 1045 680 1065 780 1165 900 1210"/>
              <path class="dot" d="M1230 835C1300 830 1400 840 1470 830"/>
              <path class="dot" d="M1240 860C1300 860 1380 865 1450 850"/>
              <path class="dot" d="M1250 880C1300 880 1350 885 1400 870"/>
              <path class="dash" d="M1210 760C1300 760 1420 780 1515 800"/>
              <path class="dash" d="M1190 775C1280 775 1420 800 1505 825"/>
            </g>
            <path class="mid" d="M493 115C500 190 560 290 620 340 660 365 720 360 760 385 790 405 810 425 830 425 880 425 1000 370 1130 300 1220 260 1290 230 1335 215"/>
            <path class="thick" d="M530 255C555 290 590 320 625 350 660 365 720 362 760 385"/>
            <path class="mid" d="M100 440C300 455 450 480 780 530 900 545 1150 600 1400 660 1440 680 1470 710 1490 740"/>
            <path class="thick" d="M335 755C350 720 430 660 495 645 480 680 400 750 335 755Z"/>
            <path class="thick" d="M265 835C300 850 500 720 600 680 680 650 730 635 755 645 800 680 840 715 890 712 930 718 945 700 945 670 940 630 930 625 930 622 1100 625 1300 670 1500 730"/>
          </g>
          <path d="M918 198 830 420 750 650 650 1050" fill="none" stroke="#555" stroke-width="4"/>
          <path d="M60 450C300 460 600 490 790 525 1000 560 1300 640 1515 775" fill="none" stroke="#555" stroke-width="4"/>
        </g>
        <ellipse cx="790" cy="527" rx="94" ry="70" fill="none" stroke="#555" stroke-width="3.500"/>
        <path d="M785 618C785 580 785 550 792 530L800 570Z" fill="#6b7fb4"/>
        <path d="M790 622C800 570 810 530 828 508 825 560 810 600 790 622Z" fill="#c8f7a8"/>
        <path d="M800 635C850 640 920 650 950 667 900 665 830 650 800 635Z" fill="#eda89a"/>
        <text class="lab" x="767" y="499" fill="#2ca12c">YC</text>
        <text class="lab" x="732" y="523" fill="#1f5ee8">ZC</text>
        <text class="lab" x="893" y="716" fill="#d92a2a">XC</text>
      </svg>

      <svg class="triad" viewBox="0 0 160 130">
        <g fill="none" stroke="#bdbdbd" stroke-width="1.100">
          <path d="M37 53 78 63 68 94 27 85ZM27 85 26 112 67 121 68 94M78 63 74 96 67 121"/>
        </g>
        <path d="M50 75H57V55L60 55 53 41 47 55 50 55Z" fill="#1339b8"/>
        <path d="M59 59 66 61 69 47 72 48 71 32 61 44 64 45Z" fill="#3eb04a"/>
        <path d="M72 90 105 94 104 90 123 102 103 104 104 99 72 95Z" fill="#dc3535"/>
        <text class="tl" x="49" y="40" fill="#2156d8">Z</text>
        <text class="tl" x="68" y="30" fill="#2d8f32">Y</text>
        <text class="tl" x="128" y="109" fill="#b83434">X</text>
      </svg>

      <div class="wm">UG<span>爱好者论坛</span>@952788888</div>
    </div>
  </section>
</main>
</body>
</html>
```

FILE: styles.css
```css
* { box-sizing: border-box; }
html, body { margin: 0; height: 100%; overflow: hidden; background: #fff; }
body { font: 11px/16px "Noto Sans CJK SC", "Liberation Sans", sans-serif; color: #333; }
.defs { position: absolute; width: 0; height: 0; }

/* ribbon */
.ribbon { display: grid; grid-template-columns: 64px 552px 627px 137px 59px 51px 110px 1fr; height: 79px; overflow: hidden; border-bottom: 1px solid #dcdcdc; }
.group { height: 74px; border-right: 1px solid #dcdcdc; display: flex; flex-direction: column; min-width: 0; }
.group.last { border-right: 0; flex-direction: row; }
.items { height: 61px; display: grid; }
.it0 { grid-template-columns: 22px 1fr; }
.it1 { grid-template-columns: 40px 40px 40px 42px 43px 39px 42px 44px 40px 40px 88px 42px; padding-left: 8px; }
.it2 { grid-template-columns: 40px 41px 40px 40px 76px 48px 60px 101px 40px 40px 40px 56px; padding-left: 7px; }
.it3 { grid-template-columns: 92px 42px; }
.tool { display: flex; flex-direction: column; align-items: center; min-width: 0; }
.ic { width: 34px; height: 22px; margin-bottom: 4px; flex: none; }
.lbl { display: block; height: 16px; text-align: center; white-space: nowrap; }
.caret { display: block; width: 0; height: 0; border-left: 4px solid transparent; border-right: 4px solid transparent; border-top: 4px solid #333; margin-top: 4px; flex: none; }
.sketchbox { display: block; width: 28px; height: 26px; flex: none; position: relative; }
.sketchbox::before { content: ""; position: absolute; left: -6px; top: -8px; width: 16px; height: 24px; border: 1.500px solid #18b4dc; }
.pencil { position: absolute; left: 3px; top: -1px; width: 28px; height: 24px; }
.shapes { display: flex; flex-direction: column; align-items: flex-start; padding-left: 16px; }
.shapes i { display: block; border: 1.500px solid #18a8d4; }
.sh-top { width: 14px; height: 18px; margin-top: -12px; border-radius: 0 0 6px 6px; }
.sh-rect { width: 15px; height: 10px; margin-top: 10px; }
.sh-circ { width: 16px; height: 17px; margin-top: 9px; border-radius: 50%; }
.stack { margin-top: -12px; display: flex; flex-direction: column; min-width: 0; }
.srow { height: 35px; display: flex; align-items: center; gap: 1px; padding-left: 5px; white-space: nowrap; }
.sic { width: 30px; height: 30px; flex: none; }
.pad4 .srow { padding-left: 4px; gap: 2px; }
.neg2 .srow { padding-left: 0; margin-left: -2px; gap: 2px; }
.pad9 .srow { padding-left: 9px; gap: 0; }
.bigA { display: block; height: 26px; font: 700 42px/26px "Liberation Serif", serif; color: #0aa8d2; margin-top: -1px; margin-bottom: 1px; }
.gfoot { height: 13px; display: flex; align-items: center; margin-top: 1px; }
.gname { flex: 1; text-align: center; color: #006a99; white-space: nowrap; overflow: hidden; line-height: 15px; }
.gfoot.left .gname { text-align: left; padding-left: 1px; letter-spacing: .4px; }
.gfoot.g4 .gname { padding-left: 4px; letter-spacing: 0; }
.garrow { width: 22px; display: flex; justify-content: center; flex: none; }
.garrow::after { content: ""; border-left: 4px solid transparent; border-right: 4px solid transparent; border-top: 4px solid #333; }
.irows { height: 61px; display: flex; flex-direction: column; gap: 10px; margin-top: -2px; flex: none; }
.irows.p6 { padding-left: 6px; }
.irows.p5 { padding-left: 5px; }
.irows.p8 { padding-left: 6px; }
.p6 .irow, .p5 .irow { gap: 6px; }
.irow { display: flex; gap: 5px; height: 18px; align-items: center; }
.mi { width: 18px; height: 18px; flex: none; }
.idiv { width: 1px; height: 18px; background: #dcdcdc; margin: 0 1px; }
.h7 { width: 20px; height: 20px; display: flex; flex-direction: column; align-items: center; flex: none; }
.h7i { width: 14px; height: 10px; flex: none; }
.h7 b { font: 700 8px/9px "Liberation Sans", sans-serif; color: #222; white-space: nowrap; }
.h7 em { font-style: normal; color: #c22; }
.dispo { width: 63px; flex: none; display: flex; flex-direction: column; align-items: center; }
.dispi { width: 34px; height: 34px; margin-top: -3px; margin-bottom: 3px; flex: none; }
.lbl.off { color: #c6c6c6; height: 32px; }
.scale { margin-top: -13px; display: flex; flex-direction: column; }
.srow2 { height: 23px; display: flex; align-items: center; gap: 4px; white-space: nowrap; }
.si { width: 16px; height: 16px; flex: none; }
.sinput { border: 1px solid #888; height: 20px; padding: 0 2px; line-height: 18px; flex: none; }

/* toolbar */
.toolbar { display: flex; align-items: center; height: 28px; border-bottom: 1px solid #a8a8a8; }
.sep { display: block; width: 1px; height: 22px; background: #dcdcdc; flex: none; }
.ti { width: 20px; height: 20px; flex: none; }
.c0 { margin: 0 0 0 5px; }
.toolbar > .caret { margin-top: 0; }
.combo { height: 21px; border: 1px solid #777; display: flex; align-items: center; justify-content: space-between; padding: 0 5px 0 1px; flex: none; white-space: nowrap; }
.combo .caret { margin-top: 0; }
.w149 { width: 149px; } .w156 { width: 156px; } .w49 { width: 49px; }
.ring { width: 14px; height: 14px; margin: 0 3px 0 8px; border: 1.500px solid #666; border-radius: 50%; flex: none; background: #fff; }
.m4 { margin-left: 4px; } .m5 { margin-left: 5px; } .m6 { margin-left: 6px; } .m7 { margin-left: 7px; }
.m8 { margin-left: 8px; } .m9 { margin-left: 9px; } .m11 { margin-left: 11px; } .m12 { margin-left: 12px; }

/* main */
.main { display: grid; grid-template-columns: 515px 1fr; height: 840px; border-bottom: 1px solid #aaa; }
.panel { border-right: 1px solid #bdbdbd; margin-right: 1px; display: flex; flex-direction: column; font-size: 12px; overflow: hidden; }
.navh { height: 28px; display: flex; align-items: center; justify-content: space-between; padding-right: 15px; }
.navt { margin-left: -4px; }
.maxbox { display: block; width: 12px; height: 11px; border: 1px solid #111; border-top-width: 2px; }
.tree { width: 505px; border: 1px solid #ddd; border-left: 0; border-bottom: 0; padding: 1px 1px 0 0; }
.thead, .row { display: grid; grid-template-columns: 170px 24px 24px 100px 1fr; }
.thead { height: 20px; background: #f0f0f0; border-bottom: 1px solid #ccc; line-height: 18px; }
.th { border-right: 1px solid #dadada; position: relative; }
.th:last-child { border-right: 0; }
.ctr { text-align: center; }
.note-h { padding-left: 6px; }
.sort { position: absolute; left: 18px; top: 7px; border-left: 4.500px solid transparent; border-right: 4.500px solid transparent; border-bottom: 5px solid #111; }
.rows { height: 779px; overflow: hidden; background-image: linear-gradient(#ebebeb, #ebebeb), linear-gradient(#ebebeb, #ebebeb), linear-gradient(#ebebeb, #ebebeb), linear-gradient(#ebebeb, #ebebeb); background-size: 1px 776px; background-repeat: no-repeat; background-position: 169px 0, 193px 0, 217px 0, 317px 0; }
.row { height: 20px; border-bottom: 1px solid #ebebeb; line-height: 18px; }
.row:nth-child(even) { background-color: rgba(0, 0, 0, .022); }
.name { display: flex; align-items: center; height: 19px; white-space: nowrap; }
.name.bold { font-weight: 700; }
.ri { width: 16px; height: 16px; flex: none; }
.ri0 { margin-left: -8px; }
.tick { width: 4px; height: 12px; margin-right: 2px; flex: none; }
.t2 { margin-left: 2px; }
.t3 { margin-left: 3px; }
.dot { width: 4px; height: 14px; margin-right: 1px; border-radius: 0 7px 7px 0; background: #33c833; border: 1px solid #444; border-left: 0; flex: none; }
.dots { width: 8px; height: 1px; border-top: 1px dotted #888; flex: none; }
.cc { display: flex; justify-content: center; align-items: center; height: 19px; }
.ok { width: 16px; height: 16px; }
.tr2 { width: 12px; height: 16px; }
.hbar { height: 5px; background: #d8d8d8; border: 1px solid #aaa; border-left: 0; }

.work { display: flex; flex-direction: column; min-width: 0; }
.tabs { height: 24px; display: flex; flex: none; }
.tab { display: flex; align-items: center; gap: 3px; width: 96px; padding-left: 5px; font-size: 12px; }
.tab.active { width: 156px; background: #00608c; color: #fff; }
.tabi { width: 18px; height: 18px; flex: none; }
.fname { font: 12px "Open Sans", sans-serif; margin-left: 1px; }
.pop { width: 12px; height: 12px; margin-left: 3px; }
.close { font: 700 16px/16px "Liberation Sans", sans-serif; }
.scene { flex: 1; position: relative; background: #25272b; border-top: 2px solid #00608c; overflow: hidden; }
.star { position: absolute; left: 295px; top: 187px; width: 540px; height: 420px; }
.thin { stroke-width: 3.600; }
.mid { stroke-width: 5.500; }
.thick { stroke-width: 9; }
.dash { stroke-dasharray: 22 5; }
.dot { stroke-dasharray: 4 7; }
.lab { font: 44px "Liberation Sans", sans-serif; }
.triad { position: absolute; left: 55px; top: 617px; width: 160px; height: 130px; }
.tl { font: 12px "Liberation Sans", sans-serif; }
.wm { position: absolute; right: 4px; bottom: 0; color: #cfcfcf; font: 13.33px/16px "Liberation Mono", monospace; white-space: nowrap; }
.wm span { font: 16px/16px "Noto Sans CJK SC", sans-serif; }
```
